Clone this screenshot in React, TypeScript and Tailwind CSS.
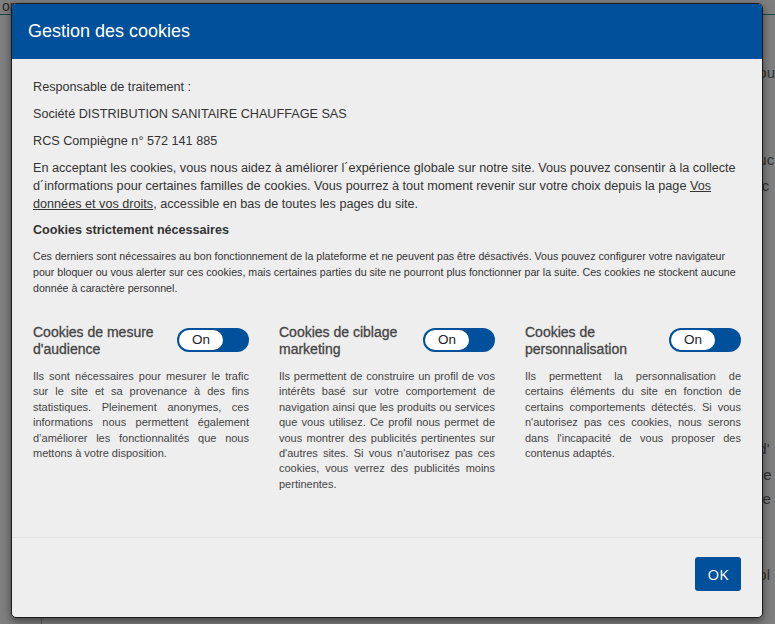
import type { ReactNode } from "react";

type Category = {
  id: string;
  title: ReactNode;
  text: string;
};

const categories: Category[] = [
  {
    id: "audience",
    title: (
      <>
        Cookies de mesure
        <br />
        d'audience
      </>
    ),
    text: "Ils sont nécessaires pour mesurer le trafic sur le site et sa provenance à des fins statistiques. Pleinement anonymes, ces informations nous permettent également d’améliorer les fonctionnalités que nous mettons à votre disposition.",
  },
  {
    id: "marketing",
    title: (
      <>
        Cookies de ciblage
        <br />
        marketing
      </>
    ),
    text: "Ils permettent de construire un profil de vos intérêts basé sur votre comportement de navigation ainsi que les produits ou services que vous utilisez. Ce profil nous permet de vous montrer des publicités pertinentes sur d'autres sites. Si vous n'autorisez pas ces cookies, vous verrez des publicités moins pertinentes.",
  },
  {
    id: "perso",
    title: (
      <>
        Cookies de
        <br />
        personnalisation
      </>
    ),
    text: "Ils permettent la personnalisation de certains éléments du site en fonction de certains comportements détectés. Si vous n'autorisez pas ces cookies, nous serons dans l'incapacité de vous proposer des contenus adaptés.",
  },
];

function Toggle() {
  return (
    <button
      type="button"
      className="flex h-[24px] w-[72px] shrink-0 items-center rounded-full bg-[#00509b] p-[2px]"
      aria-pressed="true"
    >
      <span className="flex h-[20px] w-[44px] items-center justify-center rounded-full bg-white text-[13.5px] leading-none text-[#222]">
        On
      </span>
    </button>
  );
}

export default function App() {
  return (
    <div className="relative h-[624px] w-[775px] overflow-hidden bg-white font-['Liberation_Sans',Arial,sans-serif]">
      {/* page behind the modal */}
      <div className="h-[15px] border-b border-[#2c8c8c] pl-[2px] text-[14px] leading-[12px] text-[#555]">
        or
      </div>
      <div className="flex h-[609px]">
        <div className="w-[47px] border-r border-[#bbb]" />
        <div className="flex-1 pl-[716px] text-[15px] leading-[26px] text-[#666]">
          <p className="mt-[45px]">ou</p>
          <p className="mt-[61px]">uc</p>
          <p>ic</p>
          <p className="mt-[237px]">d'</p>
          <p>re</p>
          <p className="-mt-[2px]">te</p>
          <p className="mt-[50px]">ol</p>
        </div>
      </div>

      {/* overlay */}
      <div className="absolute inset-0 bg-black/50" />

      {/* modal */}
      <div className="absolute left-[11px] top-[3px] flex h-[615px] w-[752px] flex-col overflow-hidden rounded-[5px] border border-[#1a1a1a] bg-[#eeeeee] shadow-[0_3px_9px_rgba(0,0,0,0.5)]">
        <div className="flex h-[55px] shrink-0 items-center bg-[#00509b] px-[16px]">
          <h2 className="text-[18px] font-normal text-white">Gestion des cookies</h2>
        </div>

        <div className="flex-1 px-[21px] pt-[19px] text-[#333]">
          <div className="flex flex-col gap-[9px] text-[12.65px] leading-[18px]">
            <p>Responsable de traitement :</p>
            <p>Société DISTRIBUTION SANITAIRE CHAUFFAGE SAS</p>
            <p>RCS Compiègne n° 572 141 885</p>
            <p>
              En acceptant les cookies, vous nous aidez à améliorer l´expérience globale sur notre site. Vous
              pouvez consentir à la collecte d´informations pour certaines familles de cookies. Vous pourrez à
              tout moment revenir sur votre choix depuis la page{" "}
              <a href="#" className="underline">
                Vos données et vos droits
              </a>
              , accessible en bas de toutes les pages du site.
            </p>
          </div>

          <h3 className="mt-[8px] text-[12.6px] font-bold leading-[18px]">Cookies strictement nécessaires</h3>
          <p className="mt-[9px] text-[10.65px] leading-[16px]">
            Ces derniers sont nécessaires au bon fonctionnement de la plateforme et ne peuvent pas être
            désactivés. Vous pouvez configurer votre navigateur pour bloquer ou vous alerter sur ces cookies,
            mais certaines parties du site ne pourront plus fonctionner par la suite. Ces cookies ne stockent
            aucune donnée à caractère personnel.
          </p>

          <div className="mt-[28px] grid grid-cols-3 gap-[30px]">
            {categories.map((c) => (
              <div key={c.id}>
                <div className="flex items-start justify-between">
                  <h4 className="text-[14px] font-normal leading-[17px] text-[#444] [-webkit-text-stroke:0.3px_#444]">
                    {c.title}
                  </h4>
                  <div className="pt-[4px]">
                    <Toggle />
                  </div>
                </div>
                <p className="mt-[11px] text-justify text-[11px] leading-[15.4px] text-[#444]">{c.text}</p>
              </div>
            ))}
          </div>
        </div>

        <div className="flex h-[80px] shrink-0 items-start justify-end border-t border-[#e2e2e2] px-[21px] pt-[19px]">
          <button
            type="button"
            className="flex h-[34px] w-[46px] items-center justify-center rounded-[3px] bg-[#00509b] font-['Open_Sans',sans-serif] text-[15px] text-white"
          >
            OK
          </button>
        </div>
      </div>
    </div>
  );
}
